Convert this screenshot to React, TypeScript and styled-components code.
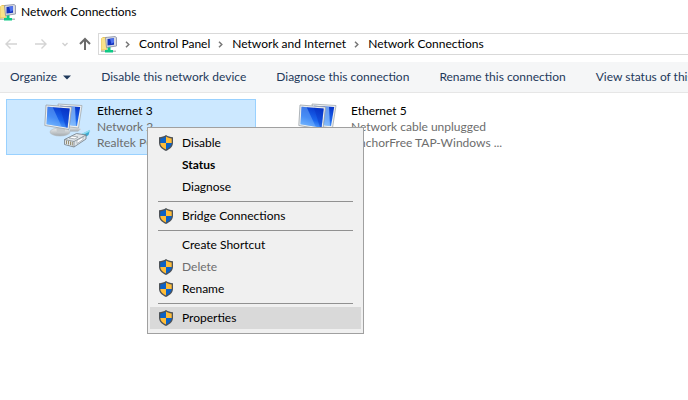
import React from "react";
import styled, { createGlobalStyle, css } from "styled-components";

const GlobalStyle = createGlobalStyle`
  * { box-sizing: border-box; }
  body {
    margin: 0;
    background: #ffffff;
    color: #000000;
    font: 12px/16px Lato, "Open Sans", sans-serif;
    overflow: hidden;
  }
  button { font: inherit; color: inherit; border: 0; padding: 0; background: none; white-space: nowrap; }
`;

const Window = styled.main`
  position: relative;
  display: flex;
  flex-direction: column;
  min-height: 100vh;
  overflow: hidden;
`;

const TitleBar = styled.header`
  display: flex;
  align-items: center;
  gap: 5px;
  height: 24px;
`;

const Title = styled.h1`
  margin: 0;
  font-size: 12px;
  font-weight: 400;
`;

const NavRow = styled.nav`
  display: flex;
  align-items: center;
  padding: 9px 0 7px 4px;
`;

const NavButtons = styled.div`
  display: flex;
  align-items: center;
  width: 94px;
  flex: none;
`;

const NavButton = styled.button<{ $w: number }>`
  display: flex;
  align-items: center;
  justify-content: flex-start;
  width: ${(p) => p.$w}px;
  height: 20px;
`;

const AddressBar = styled.div`
  flex: 1;
  display: flex;
  align-items: center;
  height: 22px;
  padding-left: 2px;
  border: 1px solid #d9d9d9;
  border-right: 0;
`;

const Crumbs = styled.ol`
  display: flex;
  margin: 0;
  padding: 0;
  list-style: none;
`;

const Crumb = styled.li`
  display: flex;
  align-items: center;
`;

const CrumbLink = styled.a`
  color: #000000;
  text-decoration: none;
  white-space: nowrap;
`;

const CrumbArrow = styled.svg`
  display: block;
  width: 5px;
  height: 7px;
  margin: 1px 9px 0 8px;
`;

const Toolbar = styled.div`
  display: flex;
  align-items: center;
  gap: 30px;
  height: 31px;
  padding-left: 10px;
  overflow: hidden;
  background: #f5f6f7;
  border-bottom: 1px solid #e6e6e6;
`;

const ToolButton = styled.button`
  display: flex;
  flex: none;
  align-items: center;
  gap: 6px;
  && { color: #1e395b; }
`;

const Connections = styled.ul`
  display: flex;
  gap: 4px;
  margin: 0;
  padding: 6px;
  list-style: none;
`;

const Tile = styled.li<{ $selected?: boolean }>`
  display: flex;
  flex: none;
  gap: 5px;
  width: 250px;
  height: 56px;
  padding: 3px 0 0 37px;
  border: 1px solid ${(p) => (p.$selected ? "#99d1ff" : "transparent")};
  background: ${(p) => (p.$selected ? "#cce8ff" : "transparent")};
`;

const TileText = styled.div`
  min-width: 0;
  flex: 1;
`;

const Line = styled.div<{ $muted?: boolean }>`
  overflow: hidden;
  text-overflow: ellipsis;
  white-space: nowrap;
  color: ${(p) => (p.$muted ? "#6d6d6d" : "#000000")};
`;

const Menu = styled.div`
  position: absolute;
  top: 127px;
  left: 147px;
  width: 217px;
  padding: 4px 2px;
  background: #f0f0f0;
  border: 1px solid #a0a0a0;
`;

const MenuItem = styled.button<{ $bold?: boolean; $active?: boolean }>`
  display: grid;
  grid-template-columns: 14px 1fr;
  column-gap: 9px;
  align-items: center;
  width: 100%;
  height: 22px;
  padding-left: 9px;
  text-align: left;
  ${(p) => p.$active && css`background: #d9d9d9;`}
  && { font-weight: ${(p) => (p.$bold ? 700 : 400)}; }
  &&:disabled { color: #6d6d6d; }
`;

const Separator = styled.hr`
  height: 1px;
  margin: 3px 8px;
  border: 0;
  background: #919191;
`;

const Svg = styled.svg`
  display: block;
  flex: none;
`;

const FolderIcon = () => (
  <Svg width="16" height="17" viewBox="0 0 16 17" aria-hidden="true">
    <path d="M0 2.500 2 1h4v13L0 15z" fill="#e8c55c" />
    <path d="M.5 2h4l1 1v10.500h-5z" fill="#f9e28a" />
    <path d="M0 14.500h15V16H0z" fill="#b9bec1" />
    <path d="M6.500 10.500h3V14h2.500v2.500H4V14h2.500z" fill="#0fc985" />
    <path d="M4.500 1.500 14 .5l1.500 1V10L5.500 11.500z" fill="#d6d9e3" stroke="#878da1" strokeWidth=".8" />
    <path d="M6.500 3 13 2.300v6.400l-6.500.9z" fill="#1332bd" />
    <path d="m9 2.700 4-.4v4L10.500 8z" fill="#4d71ee" />
  </Svg>
);

const Arrow = ({ kind }: { kind: "back" | "forward" | "up" }) => (
  <Svg width="14" height="14" viewBox="0 0 14 14" fill="none" aria-hidden="true"
    stroke={kind === "up" ? "#6b6b6b" : "#d4d4d4"} strokeWidth={kind === "up" ? 2 : 1.4}>
    {kind === "back" && <path d="M13 7H2M6.500 2.500 2 7l4.500 4.500" />}
    {kind === "forward" && <path d="M1 7h11M7.500 2.500 12 7l-4.500 4.500" />}
    {kind === "up" && <path d="M7 13V2M2 7l5-5 5 5" />}
  </Svg>
);

const Shield = () => (
  <Svg width="14" height="16" viewBox="0 0 14 16" aria-hidden="true">
    <path d="M7 0C5 1.400 2.800 2 0 2.200v5.600C0 11.400 2.600 14 7 16c4.400-2 7-4.600 7-8.200V2.200C11.200 2 9 1.400 7 0z" fill="#4d5257" />
    <path d="M7 1.500V8H1.300V3.400C3.600 3.200 5.400 2.600 7 1.500z" fill="#0c62c6" />
    <path d="M7 1.500V8h5.700V3.400C10.400 3.200 8.600 2.600 7 1.500z" fill="#ffbd38" />
    <path d="M1.300 8H7v6.600C3.500 13 1.400 10.900 1.300 8z" fill="#ffbd38" />
    <path d="M12.700 8H7v6.600c3.500-1.600 5.600-3.700 5.700-6.600z" fill="#0c62c6" />
  </Svg>
);

const ConnectionIcon = ({ id, plug }: { id: string; plug?: boolean }) => (
  <Svg width="48" height="48" viewBox="0 0 48 48" aria-hidden="true">
    <defs>
      <linearGradient id={`${id}-screen`} x1="0.6" y1="0" x2="0.2" y2="1">
        <stop offset="0" stopColor="#0838cc" />
        <stop offset=".55" stopColor="#1a66ee" />
        <stop offset="1" stopColor="#6fb6ff" />
      </linearGradient>
      <linearGradient id={`${id}-stand`} x1="0" y1="0" x2="0" y2="1">
        <stop offset="0" stopColor="#eceeef" />
        <stop offset="1" stopColor="#a3a9ad" />
      </linearGradient>
    </defs>
    <path d="m26 24 7 0 4 2-3 2.500h-8z" fill={`url(#${id}-stand)`} />
    <path d="m14 1 24 1.500-3.500 22.500-18-2z" fill="#eceff0" stroke="#a3abb0" strokeWidth=".8" />
    <path d="m16 2.700 20.200 1.200-3.200 19.200-14-1.500z" fill={`url(#${id}-screen)`} />
    <path d="m27 3.400 4 .2 1 19.300-6-.6z" fill="#9fd0ff" opacity=".65" />
    <ellipse cx="16" cy="29" rx="10" ry="4" fill={`url(#${id}-stand)`} stroke="#b4b9bc" strokeWidth=".6" />
    <path d="m12 23 9 1.500v5h-8z" fill="#c3c8cb" />
    <path d="m2 2 25.500 2-2.500 22.500L.8 22.500z" fill="#eceff0" stroke="#9aa2a8" strokeWidth=".8" />
    <path d="m3.600 3.700 22.100 1.700-2.100 19.300L2.500 21.200z" fill={`url(#${id}-screen)`} />
    <path d="m3.600 3.700 5 .4 9 19.500-15.100-2.400z" fill="#7fbcff" opacity=".45" />
    <path d="m16 4.700 9.700.7-2.100 19.300-1.600-.3z" fill="#0730c0" opacity=".4" />
    {plug && (
      <g>
        <path d="m38 31 8-4-1.500 5-4.500 3z" fill="#3aaad0" />
        <path d="m38 31.500 8-4" stroke="#8fdcf0" strokeWidth="1.400" />
        <path d="m20.500 36.500 12-6 9.500 1.500v4l-12 8-9.500-2.500z" fill="#e0e5e9" stroke="#707b84" strokeWidth=".8" />
        <path d="m20.500 36.500 9.500 2 12-6.500M30 38.500V44" fill="none" stroke="#7b868e" strokeWidth=".8" />
        <path d="m28 33 6 1-3 2-6-1z" fill="#ffffff" stroke="#8c969d" strokeWidth=".7" />
        <path d="M22.500 37.500v3.500M24.500 38v3.500M26.500 38.500V42M28.300 39v3.500" stroke="#8f8464" strokeWidth=".9" />
        <path d="m33 37.500 6-3.500v2.500l-6 4z" fill="#ffffff" stroke="#909ba4" strokeWidth=".6" />
      </g>
    )}
  </Svg>
);

const crumbs = ["Control Panel", "Network and Internet", "Network Connections"];

const tools = [
  "Disable this network device",
  "Diagnose this connection",
  "Rename this connection",
  "View status of this connection",
];

type Entry = { label: string; shield?: boolean; bold?: boolean; disabled?: boolean; active?: boolean };

const menuGroups: Entry[][] = [
  [{ label: "Disable", shield: true }, { label: "Status", bold: true }, { label: "Diagnose" }],
  [{ label: "Bridge Connections", shield: true }],
  [{ label: "Create Shortcut" }, { label: "Delete", shield: true, disabled: true }, { label: "Rename", shield: true }],
  [{ label: "Properties", shield: true, active: true }],
];

export default function App() {
  return (
    <Window>
      <GlobalStyle />
      <TitleBar>
        <FolderIcon />
        <Title>Network Connections</Title>
      </TitleBar>
      <NavRow aria-label="Address">
        <NavButtons>
          <NavButton $w={30} aria-label="Back"><Arrow kind="back" /></NavButton>
          <NavButton $w={28} aria-label="Forward"><Arrow kind="forward" /></NavButton>
          <NavButton $w={16} aria-label="Recent locations">
            <Svg width="6" height="5" viewBox="0 0 6 5" fill="none" stroke="#d0d0d0" strokeWidth="1.400" aria-hidden="true">
              <path d="m.5 1 2.500 2.500L5.500 1" />
            </Svg>
          </NavButton>
          <NavButton $w={16} aria-label="Up"><Arrow kind="up" /></NavButton>
        </NavButtons>
        <AddressBar>
          <FolderIcon />
          <Crumbs>
            {crumbs.map((name) => (
              <Crumb key={name}>
                <CrumbArrow viewBox="0 0 5 7" fill="none" stroke="#777777" strokeWidth="1.500" aria-hidden="true">
                  <path d="m1 .7 2.800 2.800L1 6.300" />
                </CrumbArrow>
                <CrumbLink href="#">{name}</CrumbLink>
              </Crumb>
            ))}
          </Crumbs>
        </AddressBar>
      </NavRow>
      <Toolbar role="toolbar">
        <ToolButton>
          Organize
          <Svg width="8" height="5" viewBox="0 0 8 5" aria-hidden="true"><path d="M0 .5h8L4 4.500z" fill="#1e395b" /></Svg>
        </ToolButton>
        {tools.map((name) => <ToolButton key={name}>{name}</ToolButton>)}
      </Toolbar>
      <Connections>
        <Tile $selected>
          <ConnectionIcon id="eth3" plug />
          <TileText>
            <Line>Ethernet 3</Line>
            <Line $muted>Network 2</Line>
            <Line $muted>Realtek PCIe GBE Family Controller</Line>
          </TileText>
        </Tile>
        <Tile>
          <ConnectionIcon id="eth5" />
          <TileText>
            <Line>Ethernet 5</Line>
            <Line $muted>Network cable unplugged</Line>
            <Line $muted>AnchorFree TAP-Windows ...</Line>
          </TileText>
        </Tile>
      </Connections>
      <Menu role="menu">
        {menuGroups.map((group, index) => (
          <React.Fragment key={index}>
            {index > 0 && <Separator />}
            {group.map((item) => (
              <MenuItem key={item.label} role="menuitem" disabled={item.disabled} $bold={item.bold} $active={item.active}>
                {item.shield ? <Shield /> : <span />}
                <span>{item.label}</span>
              </MenuItem>
            ))}
          </React.Fragment>
        ))}
      </Menu>
    </Window>
  );
}
